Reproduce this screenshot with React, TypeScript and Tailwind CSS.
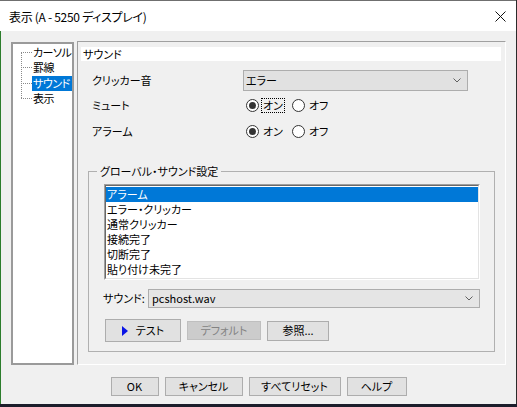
import React from "react";

const FONT = "font-['Noto_Sans_CJK_JP',sans-serif] [font-feature-settings:'palt'] whitespace-nowrap";

const Chevron = () => (
  <svg width="8" height="5" viewBox="0 0 8 5" className="shrink-0">
    <path d="M0.5 0.5 L4 4 L7.5 0.5" stroke="#606060" strokeWidth="1" fill="none" />
  </svg>
);

const Radio = ({ checked, label, focus }: { checked?: boolean; label: string; focus?: boolean }) => (
  <div className="flex items-center">
    <span className="w-[13px] h-[13px] rounded-full border border-[#333333] bg-white grid place-items-center">
      {checked && <span className="w-[7px] h-[7px] rounded-full bg-[#333333]" />}
    </span>
    <span
      className={`ml-[3px] px-[1px] leading-[13px] ${focus ? "outline-1 outline-dotted outline-black" : ""}`}
    >
      {label}
    </span>
  </div>
);

const Btn = ({ children, className = "" }: { children: React.ReactNode; className?: string }) => (
  <button className={`flex items-center justify-center border border-[#adadad] bg-[#e1e1e1] text-black ${className}`}>
    {children}
  </button>
);

const TREE = ["カーソル", "罫線", "サウンド", "表示"];
const SOUNDS = ["アラーム", "エラー・クリッカー", "通常クリッカー", "接続完了", "切断完了", "貼り付け未完了"];

export default function App() {
  return (
    <div className={`w-[517px] h-[407px] bg-[#1c1d2b] text-[11px] leading-[15px] text-black ${FONT}`}>
      <div className="w-[517px] h-[404px] flex flex-col border-r border-[#2b2b2b]">
        {/* title bar */}
        <div className="h-[31px] shrink-0 bg-white border-t border-[#6f6f6f] flex items-center justify-between pl-[9px] pr-[10px]">
          <span className="text-[12px] tracking-[-0.3px]">表示 (A - 5250 ディスプレイ)</span>
          <svg width="11" height="11" viewBox="0 0 11 11">
            <path d="M0.5 0.5 L10.5 10.5 M10.5 0.5 L0.5 10.5" stroke="#111" strokeWidth="1" />
          </svg>
        </div>

        <div className="flex-1 bg-[#f0f0f0] border-l border-[#2d7d2d] flex flex-col">
          <div className="flex items-start pt-[10px] pl-[10px]">
            {/* tree */}
            <div className="mt-[1px] w-[63px] h-[323px] border-2 border-[#9a9a9a] bg-white flex pt-[1px]">
              <svg width="19" height="62" viewBox="0 0 19 62" className="shrink-0">
                <g stroke="#8a8a8a" strokeDasharray="1 1" fill="none">
                  <path d="M8.5 8 V54" />
                  <path d="M8 7.5 H19 M8 22.5 H19 M8 38.5 H19 M8 53.5 H19" />
                </g>
              </svg>
              <div className="flex flex-col tracking-[-0.5px]">
                {TREE.map((t, i) => (
                  <div
                    key={t}
                    className={`h-[15px] ${i === 2 ? "mt-[1px] w-[40px] bg-[#0078d7] text-white" : ""} px-[1px]`}
                  >
                    {t}
                  </div>
                ))}
              </div>
            </div>

            {/* right panel */}
            <div className="ml-[3px] w-[429px] h-[324px] border-l border-t border-[#a0a0a0] border-r border-r-white border-b border-b-white flex flex-col">
              <div className="mt-[5px] ml-[3px] w-[420px] h-[14px] bg-white pl-[2px] leading-[14px]">サウンド</div>

              <div className="mt-[9px] h-[21px] flex items-center pl-[14px]">
                <span className="w-[151px]">クリッカー音</span>
                <div className="w-[225px] h-[21px] border border-[#adadad] bg-[#e1e1e1] flex items-center justify-between pl-[2px] pr-[6px]">
                  <span>エラー</span>
                  <Chevron />
                </div>
              </div>

              <div className="mt-[4px] h-[20px] flex items-center pl-[14px]">
                <span className="w-[154px]">ミュート</span>
                <div className="flex items-center gap-[8px]">
                  <Radio checked label="オン" focus />
                  <Radio label="オフ" />
                </div>
              </div>

              <div className="mt-[6px] h-[20px] flex items-center pl-[14px]">
                <span className="w-[154px]">アラーム</span>
                <div className="flex items-center gap-[8px]">
                  <Radio checked label="オン" />
                  <Radio label="オフ" />
                </div>
              </div>

              <fieldset className="mt-[23px] ml-[10px] w-[407px] border border-[#b0b0b0] pb-[9px]">
                <legend className="ml-[8px] px-[3px] leading-[14px]">グローバル・サウンド設定</legend>

                <div className="mt-[6px] ml-[15px] w-[376px] h-[96px] border border-t-[#a0a0a0] border-l-[#a0a0a0] border-r-white border-b-white">
                  <div className="w-full h-full border border-t-[#696969] border-l-[#696969] border-r-[#e3e3e3] border-b-[#e3e3e3] bg-white pt-[1px]">
                    {SOUNDS.map((s, i) => (
                      <div
                        key={s}
                        className={`h-[15px] leading-[15px] pl-[1px] ${i === 0 ? "bg-[#0078d7] text-white" : ""}`}
                      >
                        {s}
                      </div>
                    ))}
                  </div>
                </div>

                <div className="mt-[9px] h-[19px] flex items-center pl-[14px]">
                  <span className="w-[45px]">サウンド:</span>
                  <div className="w-[332px] h-[19px] border border-[#adadad] bg-[#e5e5e5] flex items-center justify-between pl-[3px] pr-[6px]">
                    <span>pcshost.wav</span>
                    <Chevron />
                  </div>
                </div>

                <div className="mt-[11px] h-[23px] flex items-center pl-[16px] gap-[6px]">
                  <Btn className="w-[76px] h-[23px]">
                    <svg width="6" height="10" viewBox="0 0 6 10" className="mr-[8px]">
                      <path d="M0 0 L6 5 L0 10 Z" fill="#0a14e6" />
                    </svg>
                    テスト
                  </Btn>
                  <button className="w-[74px] h-[19px] border border-[#bfbfbf] bg-[#cccccc] text-[#838383] flex items-center justify-center">
                    デフォルト
                  </button>
                  <Btn className="w-[62px] h-[20px]">参照...</Btn>
                </div>
              </fieldset>
            </div>
          </div>

          <div className="mt-[12px] flex justify-center gap-[6px]">
            <Btn className="w-[48px] h-[19px]">OK</Btn>
            <Btn className="w-[78px] h-[19px]">キャンセル</Btn>
            <Btn className="w-[92px] h-[19px]">すべてリセット</Btn>
            <Btn className="w-[60px] h-[19px]">ヘルプ</Btn>
          </div>
        </div>
      </div>
    </div>
  );
}
